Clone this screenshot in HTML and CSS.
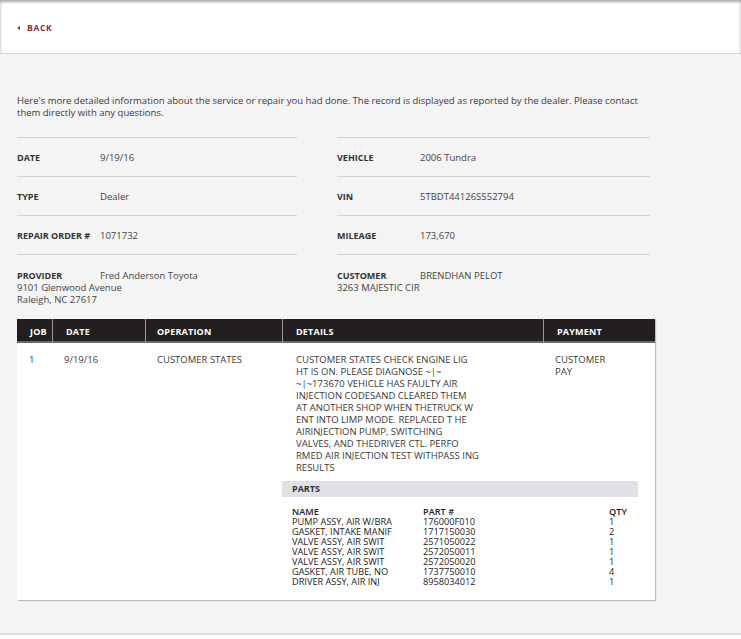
FILE: index.html
```html
<!DOCTYPE html>
<html lang="en">
<head>
<meta charset="utf-8">
<title>Service Record</title>
<link rel="stylesheet" href="styles.css">
</head>
<body>
<header class="topbar">
  <a class="back" href="#"><span class="back-arrow"></span>BACK</a>
</header>
<main class="content">
  <p class="intro">Here's more detailed information about the service or repair you had done. The record is displayed as reported by the dealer. Please contact<br>them directly with any questions.</p>

  <section class="info">
    <div class="info-col left">
      <div class="info-row"><span class="label">DATE</span><span class="value">9/19/16</span></div>
      <div class="info-row"><span class="label">TYPE</span><span class="value">Dealer</span></div>
      <div class="info-row"><span class="label">REPAIR ORDER #</span><span class="value">1071732</span></div>
      <div class="info-row last"><span class="label">PROVIDER</span><span class="value">Fred Anderson Toyota</span>
        <div class="addr">9101 Glenwood Avenue<br>Raleigh, NC 27617</div>
      </div>
    </div>
    <div class="info-col right">
      <div class="info-row"><span class="label">VEHICLE</span><span class="value">2006 Tundra</span></div>
      <div class="info-row"><span class="label">VIN</span><span class="value">5TBDT44126S552794</span></div>
      <div class="info-row"><span class="label">MILEAGE</span><span class="value">173,670</span></div>
      <div class="info-row last"><span class="label">CUSTOMER</span><span class="value">BRENDHAN PELOT</span>
        <div class="addr">3263 MAJESTIC CIR</div>
      </div>
    </div>
  </section>

  <section class="jobs">
    <div class="jobs-head">
      <div class="th c-job">JOB</div>
      <div class="th c-date">DATE</div>
      <div class="th c-op">OPERATION</div>
      <div class="th c-det">DETAILS</div>
      <div class="th c-pay">PAYMENT</div>
    </div>
    <div class="jobs-body">
      <div class="td c-job">1</div>
      <div class="td c-date">9/19/16</div>
      <div class="td c-op">CUSTOMER STATES</div>
      <div class="td c-det">CUSTOMER STATES CHECK ENGINE LIG<br>HT IS ON. PLEASE DIAGNOSE ~|~<br>~|~173670 VEHICLE HAS FAULTY AIR<br>INJECTION CODESAND CLEARED THEM<br>AT ANOTHER SHOP WHEN THETRUCK W<br>ENT INTO LIMP MODE. REPLACED T HE<br>AIRINJECTION PUMP, SWITCHING<br>VALVES, AND THEDRIVER CTL. PERFO<br>RMED AIR INJECTION TEST WITHPASS ING<br>RESULTS</div>
      <div class="td c-pay">CUSTOMER<br>PAY</div>
      <div class="parts">
        <div class="parts-bar">PARTS</div>
        <div class="parts-list">
          <div class="p-row p-head"><span>NAME</span><span>PART #</span><span>QTY</span></div>
          <div class="p-row"><span>PUMP ASSY, AIR W/BRA</span><span>176000F010</span><span>1</span></div>
          <div class="p-row"><span>GASKET, INTAKE MANIF</span><span>1717150030</span><span>2</span></div>
          <div class="p-row"><span>VALVE ASSY, AIR SWIT</span><span>2571050022</span><span>1</span></div>
          <div class="p-row"><span>VALVE ASSY, AIR SWIT</span><span>2572050011</span><span>1</span></div>
          <div class="p-row"><span>VALVE ASSY, AIR SWIT</span><span>2572050020</span><span>1</span></div>
          <div class="p-row"><span>GASKET, AIR TUBE, NO</span><span>1737750010</span><span>4</span></div>
          <div class="p-row"><span>DRIVER ASSY, AIR INJ</span><span>8958034012</span><span>1</span></div>
        </div>
      </div>
    </div>
  </section>
</main>
</body>
</html>
```

FILE: styles.css
```css
* { box-sizing: border-box; }
html, body { margin: 0; padding: 0; background: #fff; }
body {
  font-family: "Open Sans", Lato, "Liberation Sans", sans-serif;
  color: #3a3a3a;
  font-size: 9.5px;
}

.topbar {
  height: 54px;
  background: #fff;
  border-bottom: 1px solid #d6d6d6;
  box-shadow: inset 0 2px 3px rgba(0,0,0,0.35);
  padding: 20px 0 0 17px;
}
.back {
  display: inline-flex;
  align-items: center;
  color: #8a2e2e;
  text-decoration: none;
  font-weight: 700;
  font-size: 8.5px;
  letter-spacing: 0.7px;
  line-height: 12px;
}
.back-arrow {
  width: 0; height: 0;
  border-top: 2.5px solid transparent;
  border-bottom: 2.5px solid transparent;
  border-right: 3px solid #8a2e2e;
  margin-right: 7px;
}

.content {
  background: #f4f4f4;
  padding: 41px 17px 33px 17px;
  border-bottom: 2px solid #dcdce6;
}

.intro {
  margin: 0 0 18px 0;
  line-height: 12px;
  color: #3a3a3a;
}

.info {
  display: grid;
  grid-template-columns: 280px 313px;
  column-gap: 40px;
}
.info-row {
  border-top: 1px solid #d2d2d2;
  padding: 13px 0 12px 0;
  line-height: 13px;
  display: flex;
  flex-wrap: wrap;
}
.info-row.last { padding-top: 14px; padding-bottom: 0; }
.label {
  width: 83px;
  font-weight: 700;
  font-size: 9px;
  color: #333;
}
.value {
  color: #444;
}
.addr {
  width: 100%;
  line-height: 12px;
  color: #444;
}

.jobs {
  margin-top: 13px;
  width: 638px;
  box-shadow: 1px 1px 1px rgba(0,0,0,0.22);
}
.jobs-head, .jobs-body {
  display: grid;
  grid-template-columns: 35px 93px 137px 261px 112px;
}
.jobs-head {
  background: #231f20;
  border-bottom: 2px solid #6a6a6a;
  height: 24px;
}
.th {
  color: #fff;
  font-weight: 700;
  font-size: 9px;
  letter-spacing: 0.2px;
  line-height: 22px;
  padding: 2px 0 0 13px;
  border-left: 1px solid #9a9a9a;
}
.th.c-job { border-left: none; }
.th.c-op { padding-left: 11px; }

.jobs-body {
  background: #fff;
  padding-top: 11px;
  padding-bottom: 13px;
}
.td {
  line-height: 12px;
  color: #3a3a3a;
  padding-left: 12px;
}
.td.c-det { padding-left: 14px; }

.parts {
  grid-column: 4 / 6;
  margin-top: 7px;
  margin-right: 17px;
}
.parts-bar {
  background: #dfe1e4;
  height: 16px;
  line-height: 16px;
  padding-left: 10px;
  font-weight: 700;
  font-size: 9px;
  color: #333;
}
.parts-list {
  padding: 10px 0 0 10px;
}
.p-row {
  display: grid;
  grid-template-columns: 131px 186px 20px;
  line-height: 10px;
  font-size: 9.2px;
  color: #222;
}
.p-head { font-weight: 600; }
```
